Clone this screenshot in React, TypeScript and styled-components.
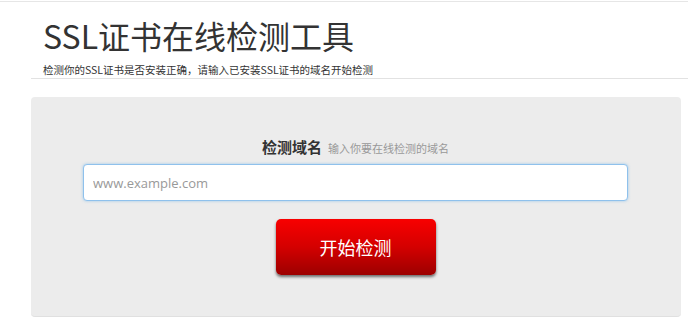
import React from "react";
import styled, { createGlobalStyle } from "styled-components";

const GlobalStyle = createGlobalStyle`
  html, body {
    margin: 0;
    padding: 0;
    background: #fff;
    font-family: "Noto Sans CJK SC", "Noto Sans", sans-serif;
    color: #333;
  }
`;

const Page = styled.div`
  width: 688px;
  height: 326px;
  overflow: hidden;
  border-top: 1px solid #e6e6e6;
  margin-top: 1px;
`;

const Header = styled.div`
  margin-left: 31px;
  padding: 13px 0 1px 12px;
  border-bottom: 1px solid #e2e2e2;
`;

const Title = styled.h1`
  margin: 0;
  font-size: 32px;
  font-weight: 400;
  line-height: 40px;
  color: #333;
`;

const SubTitle = styled.p`
  margin: 8px 0 0;
  font-size: 10.5px;
  line-height: 14px;
  color: #333;
`;

const Panel = styled.div`
  margin: 18px 7px 0 31px;
  height: 220px;
  box-sizing: border-box;
  background: #ececec;
  border-radius: 4px;
  border-bottom: 1px solid #e0e0e0;
  padding: 39px 53px 0 52px;
  display: flex;
  flex-direction: column;
  align-items: center;
`;

const LabelRow = styled.div`
  display: flex;
  align-items: baseline;
  gap: 6px;
  height: 28px;
`;

const Label = styled.span`
  font-size: 15px;
  font-weight: 700;
  color: #333;
`;

const Hint = styled.span`
  font-size: 11px;
  color: #999;
`;

const Input = styled.input`
  width: 100%;
  height: 37px;
  box-sizing: border-box;
  border: 1px solid #8fc1ec;
  border-radius: 4px;
  box-shadow: 0 0 3px rgba(102, 175, 233, 0.6);
  padding: 0 9px;
  font-family: "Open Sans", "Noto Sans", sans-serif;
  font-size: 13px;
  color: #555;
  outline: none;
  &::placeholder {
    color: #999;
  }
`;

const Button = styled.button`
  margin-top: 18px;
  width: 160px;
  height: 56px;
  border: none;
  border-radius: 5px;
  background: linear-gradient(to bottom, #f80000 0%, #d40000 50%, #9c0000 100%);
  box-shadow: 0 2px 3px rgba(0, 0, 0, 0.55);
  color: #fff;
  font-family: "Noto Sans CJK SC", sans-serif;
  font-size: 18px;
  cursor: pointer;
`;

export default function App() {
  return (
    <Page>
      <GlobalStyle />
      <Header>
        <Title>SSL证书在线检测工具</Title>
        <SubTitle>检测你的SSL证书是否安装正确，请输入已安装SSL证书的域名开始检测</SubTitle>
      </Header>
      <Panel>
        <LabelRow>
          <Label>检测域名</Label>
          <Hint>输入你要在线检测的域名</Hint>
        </LabelRow>
        <Input placeholder="www.example.com" />
        <Button>开始检测</Button>
      </Panel>
    </Page>
  );
}
